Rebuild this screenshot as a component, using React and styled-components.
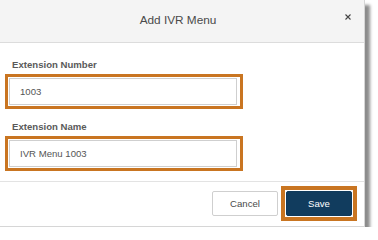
import React from "react";
import styled, { createGlobalStyle } from "styled-components";

const Global = createGlobalStyle`
  html, body { margin: 0; padding: 0; background: #ffffff; }
  body { font-family: "Liberation Sans", Arial, sans-serif; }
`;

const Dialog = styled.div`
  width: 365px;
  height: 227px;
  box-sizing: border-box;
  background: #ffffff;
  border: 1px solid #d6d6d6;
  border-left: none;
  border-top: none;
  box-shadow: 5px 5px 3px rgba(0, 0, 0, 0.45);
  display: flex;
  flex-direction: column;
`;

const Header = styled.div`
  height: 42px;
  background: #f4f4f4;
  border-bottom: 1px solid #dcdcdc;
  display: flex;
  align-items: center;
  justify-content: center;
  position: relative;
`;

const Title = styled.div`
  font-size: 11.8px;
  color: #4a4a4a;
  margin-left: -8px;
  margin-top: -3px;
`;

const Close = styled.button`
  position: absolute;
  right: 11px;
  top: 12px;
  width: 10px;
  height: 10px;
  padding: 0;
  border: none;
  background: transparent;
  display: flex;
  align-items: center;
  justify-content: center;
`;

const Body = styled.div`
  padding: 16px 0 10px 5px;
  display: flex;
  flex-direction: column;
  border-bottom: 1px solid #e3e3e3;
`;

const Field = styled.div`
  display: flex;
  flex-direction: column;
  & + & { margin-top: 12px; }
`;

const Label = styled.div`
  font-size: 9.6px;
  line-height: 12px;
  font-weight: bold;
  color: #5a5a5a;
  padding-left: 7px;
  margin-bottom: 3px;
`;

const Highlight = styled.div`
  border: ${(p) => p.$w || 3}px solid #c97521;
  padding: 1px;
  display: ${(p) => (p.$inline ? "inline-flex" : "flex")};
`;

const Input = styled.div`
  width: 228px;
  height: 27px;
  box-sizing: border-box;
  border: 1px solid #cfcfcf;
  background: #fff;
  display: flex;
  align-items: center;
  padding-left: 10px;
  font-size: 9.6px;
  color: #555;
`;

const HighlightWrap = styled.div`
  width: 238px;
`;

const Footer = styled.div`
  flex: 1;
  display: flex;
  align-items: center;
  justify-content: flex-end;
  padding-right: 7px;
  gap: 3px;
  padding-bottom: 1px;
`;

const Button = styled.button`
  width: 66px;
  height: 25px;
  box-sizing: border-box;
  font-family: "Liberation Sans", Arial, sans-serif;
  font-size: 9.6px;
  border-radius: 2px;
  border: 1px solid ${(p) => (p.$primary ? "#0f3a5c" : "#cfcfcf")};
  background: ${(p) => (p.$primary ? "#113c5e" : "#ffffff")};
  color: ${(p) => (p.$primary ? "#ffffff" : "#4a4a4a")};
  padding: 0;
`;

export default function App() {
  return (
    <>
      <Global />
      <Dialog>
        <Header>
          <Title>Add IVR Menu</Title>
          <Close aria-label="close">
            <svg width="6" height="6" viewBox="0 0 6 6">
              <path d="M0.5 0.5 L5.5 5.5 M5.5 0.5 L0.5 5.5" stroke="#444" strokeWidth="1.1" />
            </svg>
          </Close>
        </Header>
        <Body>
          <Field>
            <Label>Extension Number</Label>
            <HighlightWrap>
              <Highlight>
                <Input>1003</Input>
              </Highlight>
            </HighlightWrap>
          </Field>
          <Field>
            <Label>Extension Name</Label>
            <HighlightWrap>
              <Highlight>
                <Input>IVR Menu 1003</Input>
              </Highlight>
            </HighlightWrap>
          </Field>
        </Body>
        <Footer>
          <Button>Cancel</Button>
          <Highlight $w={4} $inline>
            <Button $primary>Save</Button>
          </Highlight>
        </Footer>
      </Dialog>
    </>
  );
}
